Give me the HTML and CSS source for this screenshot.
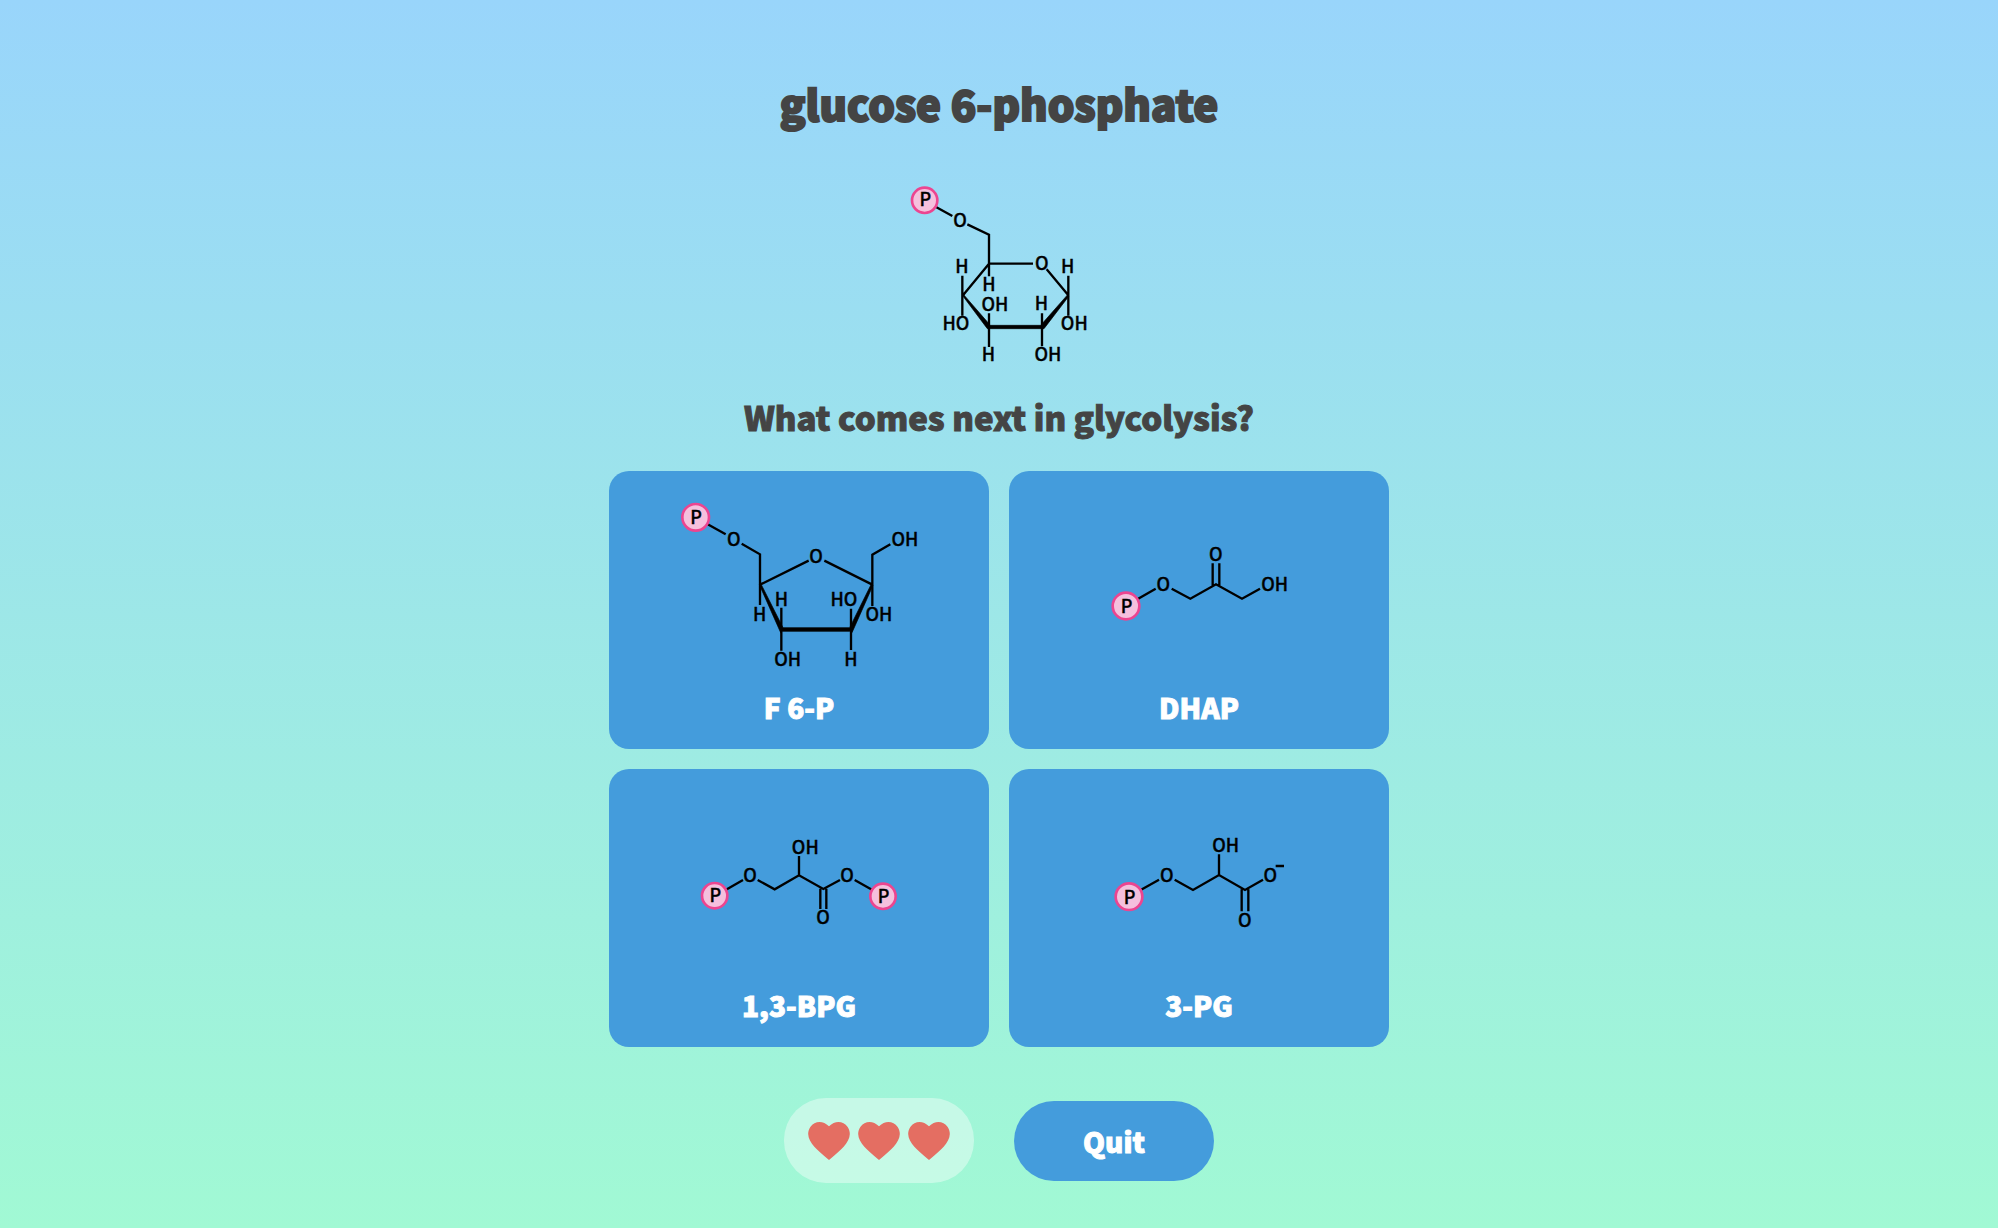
FILE: index.html
```html
<!DOCTYPE html>
<html lang="en">
<head>
<meta charset="utf-8">
<meta name="viewport" content="width=device-width, initial-scale=1">
<title>Glycolysis quiz</title>
<link rel="stylesheet" href="styles.css">
</head>
<body>
<main class="quiz">
  <h1 class="title">glucose 6-phosphate</h1>
  <svg class="molecule prompt" viewBox="-3 -1 660 630" role="img" aria-label="Structure of glucose 6-phosphate">
    <path class="bond" d="M138 110L187 137M232 162L297 193V318M297 280H429M470 297L535 375M297 280L219 375M217 316V436M535 316V436M297 429V530M456 429V528"/>
    <path class="wedge" d="M217 375L221 373L301 465H452L533 373L537 377L462 475H292Z"/>
    <circle class="phosphate" cx="104" cy="90" r="38"/>
    <g class="atoms">
      <text x="106" y="108">P</text><text x="210" y="171">O</text><text x="455" y="298">O</text>
      <text x="216" y="309">H</text><text x="533" y="309">H</text><text x="297" y="362">H</text>
      <text x="315" y="421">OH</text><text x="454" y="420">H</text><text x="198" y="480">HO</text>
      <text x="553" y="480">OH</text><text x="295" y="573">H</text><text x="474" y="573">OH</text>
    </g>
  </svg>
  <h2 class="question">What comes next in glycolysis?</h2>
  <div class="answers">
    <button class="answer" type="button">
      <svg class="molecule" viewBox="27 33 1140 648" aria-hidden="true">
        <path class="bond" d="M323 193L377 223M425 251L480 283V435M480 374L626 302M673 302L817 374M871 253L817 284V438M544 443V572M753 446V570"/>
        <path class="wedge" d="M478 374L483 372L549 503H749L814 372L819 376L756 518L749 514H547L542 518Z"/>
        <circle class="phosphate" cx="287" cy="172" r="40"/>
        <g class="atoms">
          <text x="288" y="191">P</text><text x="401" y="258">O</text><text x="648" y="309">O</text>
          <text x="915" y="258">OH</text><text x="544" y="437">H</text><text x="732" y="437">HO</text>
          <text x="479" y="483">H</text><text x="837" y="483">OH</text><text x="563" y="618">OH</text><text x="753" y="618">H</text>
        </g>
      </svg>
      <span class="name">F 6-P</span>
    </button>
    <button class="answer" type="button">
      <svg class="molecule" viewBox="27 33 1140 648" aria-hidden="true">
        <path class="bond" d="M412 418L467 386M515 386L571 416L648 373L726 416L780 386M638 376V310M658 376V310"/>
        <circle class="phosphate" cx="378" cy="438" r="40"/>
        <g class="atoms">
          <text x="380" y="458">P</text><text x="490" y="392">O</text><text x="647" y="302">O</text><text x="824" y="392">OH</text>
        </g>
      </svg>
      <span class="name">DHAP</span>
    </button>
    <button class="answer" type="button">
      <svg class="molecule" viewBox="27 27 1140 648" aria-hidden="true">
        <path class="bond" d="M378 389L429 360M473 360L524 388L597 346L670 387L720 360M764 360L816 389M597 346V288M661 386V447M679 386V447"/>
        <circle class="phosphate" cx="344" cy="407" r="38"/><circle class="phosphate" cx="849" cy="409" r="38"/>
        <g class="atoms">
          <text x="346" y="427">P</text><text x="450" y="366">O</text><text x="616" y="281">OH</text>
          <text x="741" y="366">O</text><text x="851" y="428">P</text><text x="669" y="492">O</text>
        </g>
      </svg>
      <span class="name">1,3-BPG</span>
    </button>
    <button class="answer" type="button">
      <svg class="molecule" viewBox="27 27 1140 648" aria-hidden="true">
        <path class="bond" d="M422 390L477 359M524 359L579 390L657 345L735 390L789 359M657 345V283M725 388V454M745 388V454M827 318H852"/>
        <circle class="phosphate" cx="387" cy="410" r="40"/>
        <g class="atoms">
          <text x="389" y="431">P</text><text x="500" y="365">O</text><text x="677" y="275">OH</text>
          <text x="811" y="365">O</text><text x="734" y="500">O</text>
        </g>
      </svg>
      <span class="name">3-PG</span>
    </button>
  </div>
  <div class="footer">
    <div class="lives" role="img" aria-label="3 lives left">
      <svg class="heart" viewBox="0 0 126 114"><path d="M63 13C44-6 20-3 7 15C-7 38 4 56 19 74Q30 86 63 114Q96 86 107 74C122 56 133 38 119 15C106-3 82-6 63 13Z"/></svg>
      <svg class="heart" viewBox="0 0 126 114"><path d="M63 13C44-6 20-3 7 15C-7 38 4 56 19 74Q30 86 63 114Q96 86 107 74C122 56 133 38 119 15C106-3 82-6 63 13Z"/></svg>
      <svg class="heart" viewBox="0 0 126 114"><path d="M63 13C44-6 20-3 7 15C-7 38 4 56 19 74Q30 86 63 114Q96 86 107 74C122 56 133 38 119 15C106-3 82-6 63 13Z"/></svg>
    </div>
    <button class="quit" type="button">Quit</button>
  </div>
</main>
</body>
</html>
```
FILE: styles.css
```css
* {
  box-sizing: border-box;
}

body {
  margin: 0;
  min-height: 100vh;
  background: linear-gradient(#99d5fb, #a1f9d4);
  color: #444;
  font-family: "Source Sans Pro", "Noto Sans CJK SC", sans-serif;
  font-weight: 900;
}

.quiz {
  display: flex;
  flex-direction: column;
  align-items: center;
  padding: 73px 20px 44px;
}

.title {
  margin: 0;
  font-size: 42px;
  font-weight: 900;
  line-height: 60px;
  text-align: center;
  -webkit-text-stroke: 2px #444;
}

.prompt {
  width: 220px;
  margin: 37px 0 13px;
}

.question {
  margin: 0;
  font-size: 33px;
  font-weight: 900;
  line-height: 48px;
  text-align: center;
  -webkit-text-stroke: 1px #444;
}

.answers {
  display: grid;
  grid-template-columns: 1fr 1fr;
  gap: 20px;
  width: 100%;
  max-width: 780px;
  margin-top: 30px;
}

.answer,
.quit {
  border: 0;
  background: #449cdc;
  color: #fff;
  font: inherit;
  font-size: 28px;
  line-height: 40px;
  cursor: pointer;
}

.name,
.quit {
  -webkit-text-stroke: 1px #fff;
}

.answer {
  display: flex;
  flex-direction: column;
  padding: 0 0 22px;
  border-radius: 20px;
}

.answer .molecule {
  width: 100%;
}

.name {
  align-self: center;
}

.molecule {
  display: block;
  height: auto;
}

.bond {
  fill: none;
  stroke: #000;
  stroke-width: 7;
}

.wedge {
  fill: #000;
  stroke: #000;
  stroke-width: 2;
}

.phosphate {
  fill: #f5c0dd;
  stroke: #ec4590;
  stroke-width: 8;
}

.atoms {
  fill: #000;
  stroke: #000;
  stroke-width: 1;
  font-size: 54px;
  font-weight: 500;
  text-anchor: middle;
}

.footer {
  display: flex;
  flex-wrap: wrap;
  justify-content: center;
  align-items: center;
  gap: 20px 40px;
  margin-top: 51px;
}

.lives {
  display: flex;
  gap: 8px;
  padding: 24px 24px 23px;
  border-radius: 42px;
  background: rgba(255, 255, 255, 0.4);
}

.heart {
  width: 42px;
  height: 38px;
  fill: #e46e62;
}

.quit {
  width: 200px;
  padding: 20px;
  border-radius: 40px;
}
```
